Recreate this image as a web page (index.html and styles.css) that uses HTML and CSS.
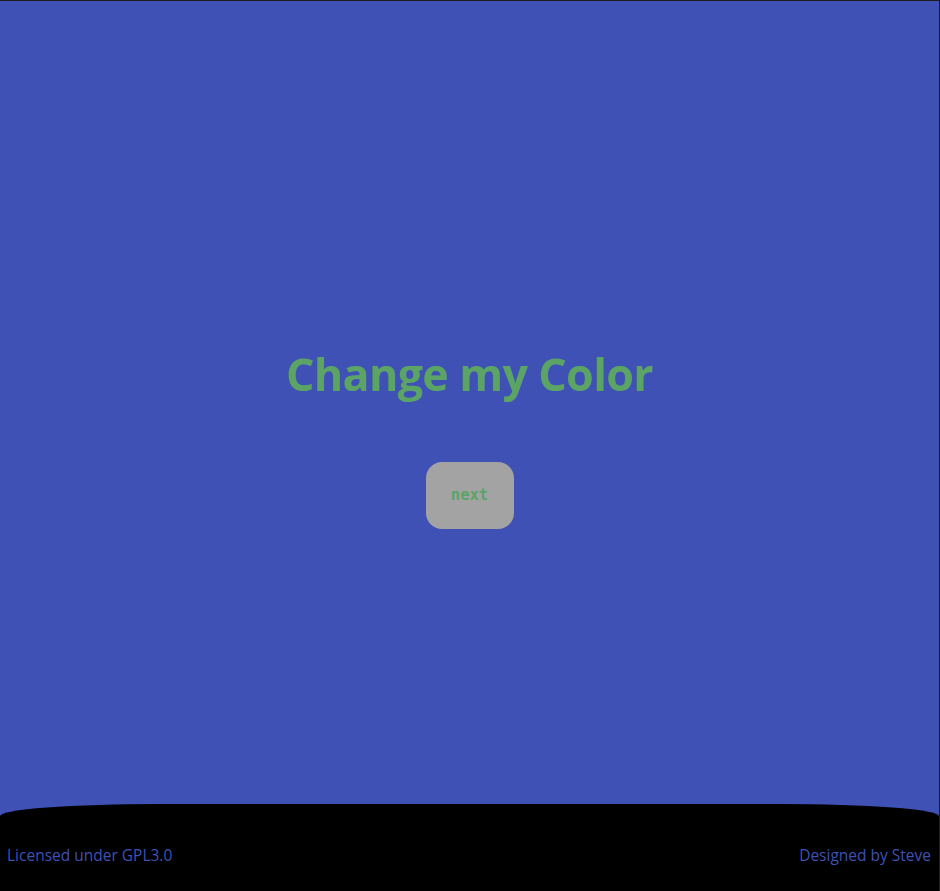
FILE: index.html
```html
<!DOCTYPE html>
<html lang="en">
<head>
  <meta charset="UTF-8" />
  <title>Change my Color</title>
  <link rel="stylesheet" href="styles.css">
</head>
<body>

<div class="page">
  <main class="stage">
    <h1 id="title">Change my Color</h1>
    <button class="next" onclick="nextColor()">next</button>
  </main>

  <footer class="footer">
    <span>Licensed under GPL3.0</span>
    <span>Designed by Steve</span>
  </footer>
</div>

</body>
</html>
```

FILE: styles.css
```css
html { background: #1c1c1c; }
body {
  margin: 0;
  font-family: 'Open Sans', 'Noto Sans', sans-serif;
}
.page {
  margin-top: 1px;
  margin-right: 1px;
  height: 890px;
  background: #3f51b5;
  display: flex;
  flex-direction: column;
}
.stage {
  flex: 1;
  display: flex;
  flex-direction: column;
  align-items: center;
  justify-content: center;
  padding-top: 66px;
}
h1 {
  margin: 0 0 58px;
  color: #5ba466;
  font-size: 44.5px;
  font-weight: 700;
  letter-spacing: -0.5px;
}
.next {
  width: 88px;
  height: 67px;
  border: none;
  border-radius: 16px;
  background: #a3a3a3;
  color: #5ba466;
  font-family: 'DejaVu Sans Mono', monospace;
  font-size: 15.5px;
  font-weight: 700;
  cursor: pointer;
}
.footer {
  height: 87px;
  background: #000;
  border-radius: 160px 160px 0 0 / 12px 12px 0 0;
  display: flex;
  justify-content: space-between;
  align-items: center;
  padding: 14px 8px 0 7px;
  box-sizing: border-box;
  color: #3f51b5;
  font-size: 15.5px;
}
```
